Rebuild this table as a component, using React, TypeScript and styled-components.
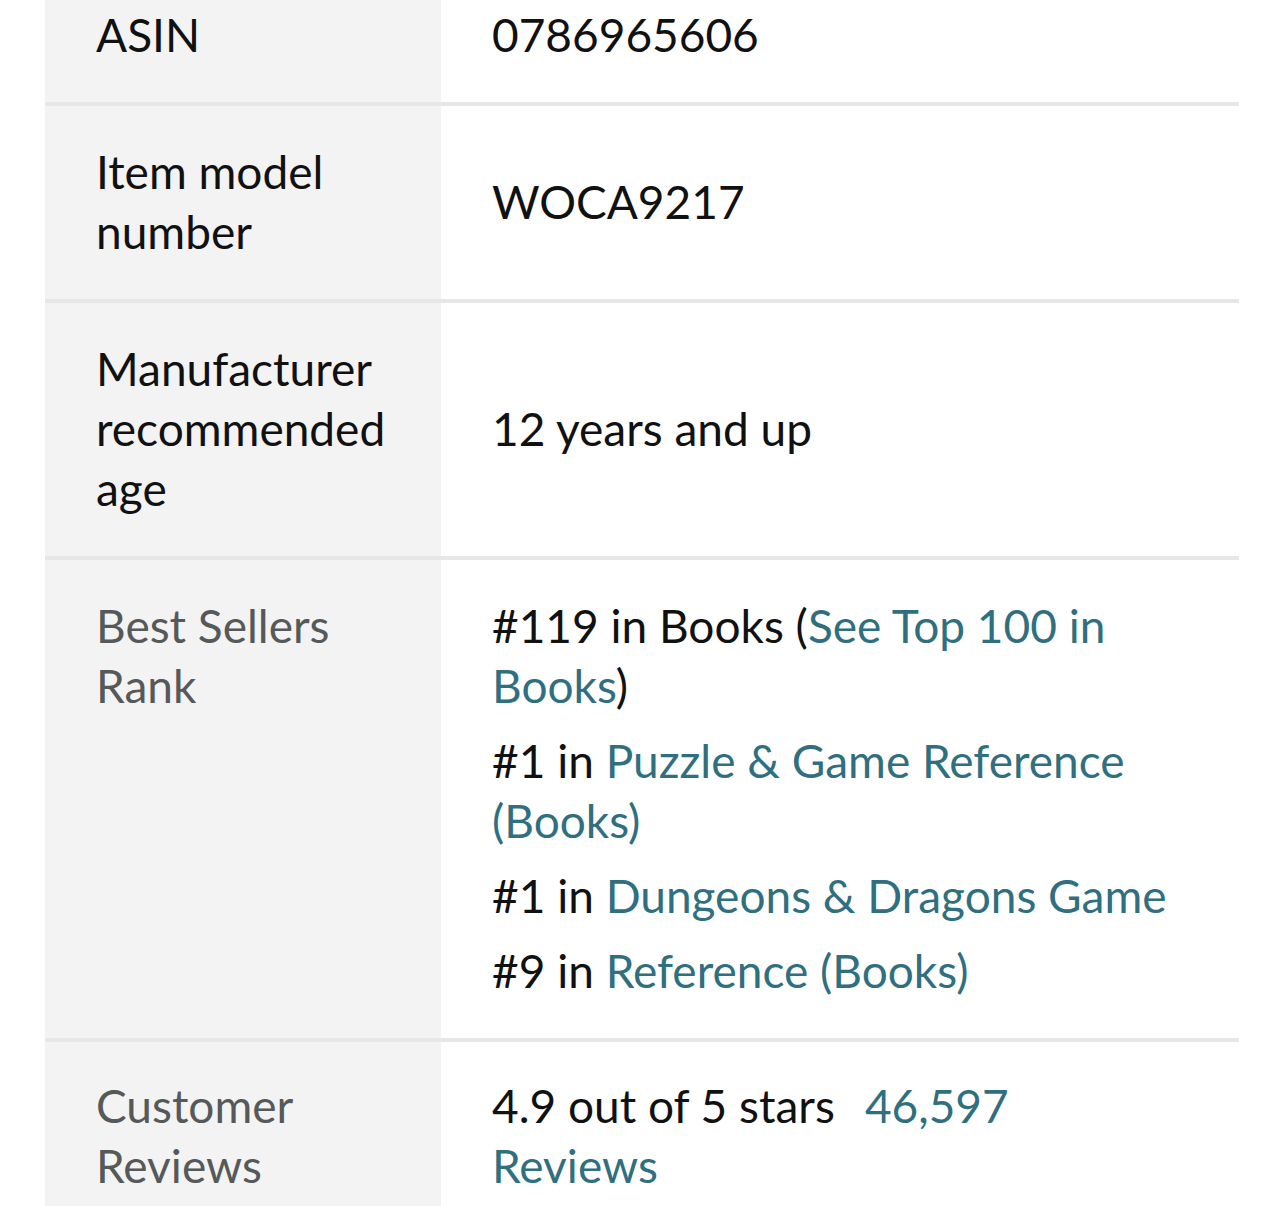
import styled, { createGlobalStyle } from "styled-components"

const GlobalStyle = createGlobalStyle`
    body {
        margin: 0;
        background: #ffffff;
        font-family: Lato, "Open Sans", sans-serif;
        -webkit-font-smoothing: antialiased;
    }
`

type Rank = { pos: string; link: string; after?: string }

const ranks: Rank[] = [
    { pos: "#119 in Books (", link: "See Top 100 in Books", after: ")" },
    { pos: "#1 in ", link: "Puzzle & Game Reference (Books)" },
    { pos: "#1 in ", link: "Dungeons & Dragons Game" },
    { pos: "#9 in ", link: "Reference (Books)" },
]

export default function App() {
    return (
        <>
            <GlobalStyle />
            <Page>
                <DetailTable>
                    <Row>
                        <Label>ASIN</Label>
                        <Value>0786965606</Value>
                    </Row>
                    <Row>
                        <Label>Item model number</Label>
                        <Value>WOCA9217</Value>
                    </Row>
                    <Row>
                        <Label>Manufacturer recommended age</Label>
                        <Value>12 years and up</Value>
                    </Row>
                    <Row $top>
                        <Label $muted>Best Sellers Rank</Label>
                        <Value>
                            <RankList>
                                {ranks.map(r => (
                                    <li key={r.link}>
                                        {r.pos}
                                        <Link>{r.link}</Link>
                                        {r.after}
                                    </li>
                                ))}
                            </RankList>
                        </Value>
                    </Row>
                    <Row $top $padTop={34} $last>
                        <Label $muted>Customer Reviews</Label>
                        <Value>
                            4.9 out of 5 stars<ReviewCount>46,597 Reviews</ReviewCount>
                        </Value>
                    </Row>
                </DetailTable>
            </Page>
        </>
    )
}

const Page = styled.div`
    padding: 0 45px;
    height: 1206px;
    overflow: hidden;
`

const DetailTable = styled.div`
    margin-top: -31px;
    display: flex;
    flex-direction: column;
    font-size: 46px;
    line-height: 60px;
    color: #111111;
`

const Row = styled.div<{ $top?: boolean; $padTop?: number; $last?: boolean }>`
    display: grid;
    grid-template-columns: 396px 1fr;
    align-items: ${p => (p.$top ? "start" : "center")};
    border-bottom: ${p => (p.$last ? "none" : "4px solid #e7e7e7")};
    background: linear-gradient(to right, #f3f3f3 396px, #ffffff 396px);

    & > div {
        padding-top: ${p => p.$padTop ?? 36}px;
        padding-bottom: 37px;
    }
`

const Label = styled.div<{ $muted?: boolean }>`
    padding-left: 51px;
    padding-right: 50px;
    color: ${p => (p.$muted ? "#565959" : "#111111")};
`

const Value = styled.div`
    padding-left: 51px;
    padding-right: 68px;
`

const RankList = styled.ul`
    list-style: none;
    margin: 0;
    padding: 0;
    display: flex;
    flex-direction: column;
    gap: 15px;
`

const Link = styled.span`
    color: #2f6f80;
`

const ReviewCount = styled.span`
    color: #2f6f80;
    margin-left: 30px;
`
